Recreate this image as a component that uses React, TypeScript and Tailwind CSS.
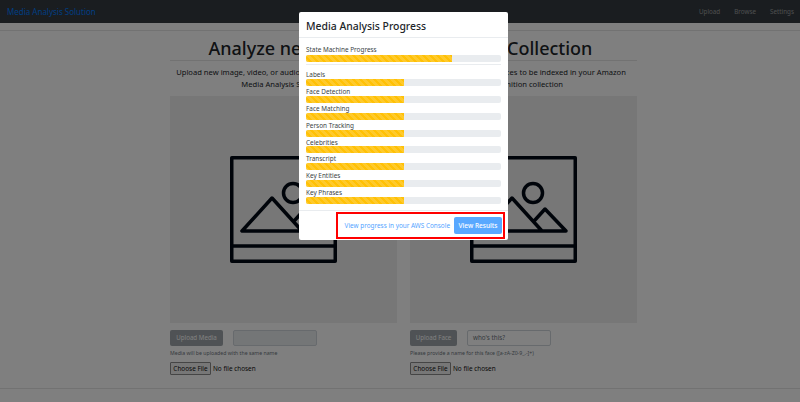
const font = { fontFamily: '"Noto Sans", "Open Sans", sans-serif' }

const tasks = ['Labels', 'Face Detection', 'Face Matching', 'Person Tracking', 'Celebrities', 'Transcript', 'Key Entities', 'Key Phrases']

function MediaIcon() {
  return (
    <svg width="107" height="107" viewBox="0 0 107 107" fill="none" stroke="#000814" strokeWidth="3.5" strokeLinejoin="round" strokeLinecap="round">
      <rect x="1.75" y="1.75" width="103.5" height="103.5" />
      <path d="M2 90H105" />
      <circle cx="63" cy="37" r="9.5" />
      <path d="M12 75H96L75 53L65 64M12 75L42 42L72 75" />
    </svg>
  )
}

function Bar({ pct }: { pct: string }) {
  return (
    <div className="h-[7px] rounded-[2px] bg-[#e9ecef] overflow-hidden">
      <div className={`h-full ${pct} bg-[#ffc107] bg-[linear-gradient(45deg,rgba(255,255,255,.15)_25%,transparent_25%,transparent_50%,rgba(255,255,255,.15)_50%,rgba(255,255,255,.15)_75%,transparent_75%,transparent)] bg-[length:7px_7px]`} />
    </div>
  )
}

function Column({ title, lines, button, buttonW, hint, value }: { title: string; lines: string[]; button: string; buttonW: string; hint: string; value?: string }) {
  return (
    <div className="w-[227px]">
      <h2 className="h-[30px] text-center text-[18px] leading-[35px] font-medium text-[#212529] whitespace-nowrap border-b border-black/10">{title}</h2>
      <div className="h-[35px] pt-[5px] text-center text-[7.6px] leading-[12px] text-[#212529] whitespace-nowrap">
        {lines.map(l => <p key={l}>{l}</p>)}
      </div>
      <div className="h-[227px] bg-[#eeeeee] flex items-center justify-center">
        <MediaIcon />
      </div>
      <div className="flex gap-[10px] mt-[7px]">
        <button className={`h-[16px] ${buttonW} rounded-[2px] bg-[#6c757d] opacity-65 text-white text-[6.2px]`}>{button}</button>
        {value ? (
          <div className="w-[84px] h-[16px] rounded-[2px] border border-[#ced4da] bg-white pl-[5px] text-[6.3px] leading-[14px] text-[#6c757d]">{value}</div>
        ) : (
          <div className="w-[84px] h-[16px] rounded-[2px] border border-[#ced4da] bg-[#e9ecef]" />
        )}
      </div>
      <p className="mt-[3px] text-[5.2px] leading-[8px] text-[#6c757d] whitespace-nowrap">{hint}</p>
      <div className="flex items-center mt-[5px] text-[6.4px] text-[#111]">
        <button className="w-[41px] h-[13px] rounded-[1px] border border-[#8a8a8a] bg-[#efefef] text-[6.4px] leading-[11px] whitespace-nowrap">Choose File</button>
        <span className="ml-[2px]">No file chosen</span>
      </div>
    </div>
  )
}

export default function App() {
  return (
    <div className="relative w-[800px] h-[402px] overflow-hidden bg-white" style={font}>
      <nav className="h-[23px] bg-[#343a40] flex items-center justify-between pl-[7px] pr-[6px]">
        <span className="text-[8px] text-[#007bff]">Media Analysis Solution</span>
        <div className="flex gap-[14px] text-[6.3px] text-white/50">
          <span>Upload</span>
          <span>Browse</span>
          <span>Settings</span>
        </div>
      </nav>
      <div className="mt-[7px] border-t border-black/10" />
      <div className="flex justify-center gap-[13px] pl-[7px]">
        <Column
          title="Analyze new Files"
          lines={['Upload new image, video, or audio file to be analyzed by the', 'Media Analysis Solution']}
          button="Upload Media"
          buttonW="w-[53px]"
          hint="Media will be uploaded with the same name"
        />
        <Column
          title="Faces Collection"
          lines={['Upload new image of faces to be indexed in your Amazon', 'Rekognition collection']}
          button="Upload Face"
          buttonW="w-[47px]"
          hint="Please provide a name for this face ([a-zA-Z0-9_.-]+)"
          value="who's this?"
        />
      </div>
      <div className="mt-[13px] border-t border-black/10" />

      {/* modal */}
      <div className="absolute inset-0 bg-black/50 flex justify-center items-start pt-[12px] pl-[7px]">
        <div className="relative w-[209px] h-[228px] bg-white rounded-[2px] text-[#212529]">
          <div className="h-[26px] px-[7px] border-b border-[#e9ecef] text-[10.4px] leading-[28px] font-medium whitespace-nowrap">Media Analysis Progress</div>
          <div className="px-[7px]">
            <div className="h-[27px] pt-[6px] border-b border-[#e9ecef]">
              <p className="h-[11px] text-[6.4px] leading-[12px] text-[#3a3f44] whitespace-nowrap">State Machine Progress</p>
              <Bar pct="w-3/4" />
            </div>
            <div className="pt-[4px]">
              {tasks.map(t => (
                <div key={t} className="h-[16.9px]">
                  <p className="h-[9.9px] text-[6.4px] leading-[11px] text-[#3a3f44] whitespace-nowrap">{t}</p>
                  <Bar pct="w-1/2" />
                </div>
              ))}
            </div>
          </div>
          <div className="absolute left-0 right-0 top-[198px] h-[30px] border-t border-[#e9ecef] flex items-center justify-end gap-[4px] pr-[6px]">
            <a className="text-[6.4px] text-[#007bff] opacity-70 whitespace-nowrap">View progress in your AWS Console</a>
            <button className="w-[48px] h-[17px] rounded-[2px] bg-[#007bff] opacity-65 text-white text-[6.5px] font-medium">View Results</button>
          </div>
          <div className="absolute left-[37px] top-[200px] w-[169px] h-[27px] border-2 border-[#ff0000]" />
        </div>
      </div>
    </div>
  )
}
